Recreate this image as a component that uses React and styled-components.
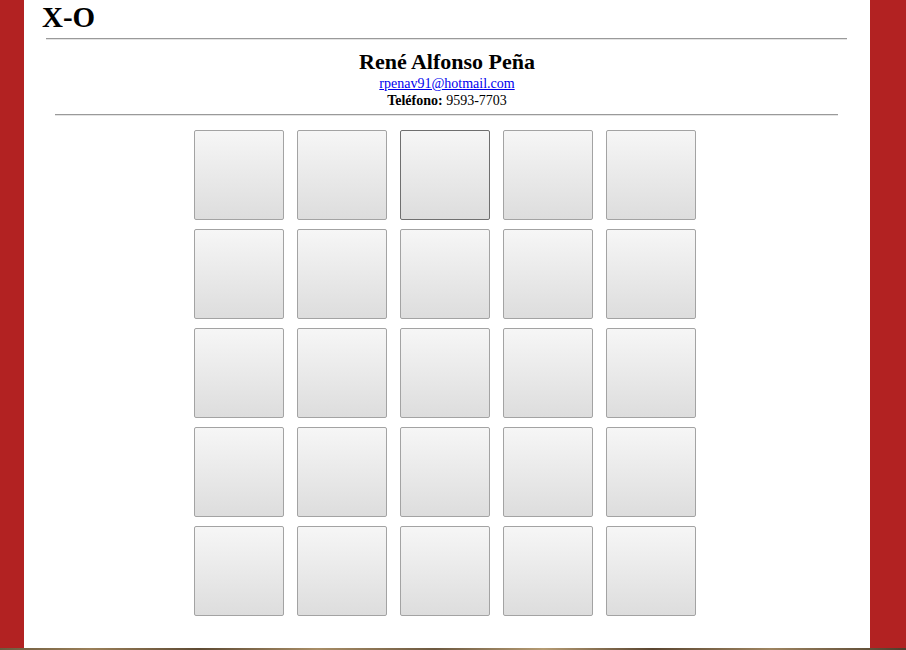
import React from "react";
import styled, { createGlobalStyle } from "styled-components";

const GlobalStyle = createGlobalStyle`
html, body {
  margin: 0;
  padding: 0;
  background-color: #b22222;
  font-family: "Liberation Serif", "Times New Roman", serif;
  color: #000;
}
`

const Page = styled.div`
width: 906px;
overflow: hidden;
`

const Sheet = styled.main`
width: 846px;
margin-left: 24px;
background-color: #fff;
padding-bottom: 32px;
display: flex;
flex-direction: column;
`

const Logo = styled.h1`
margin: 0;
padding: 1px 0 0 18px;
font-size: 29px;
line-height: 32px;
font-weight: bold;
`

const Rule = styled.hr`
margin: ${props => props.$margin};
border: none;
border-top: 1px solid #9a9a9a;
border-bottom: 1px solid #e4e4e4;
height: 0;
`

const Contact = styled.section`
display: flex;
flex-direction: column;
align-items: center;
text-align: center;
`

const Name = styled.h2`
margin: 9px 0 0;
font-size: 22px;
line-height: 26px;
font-weight: bold;
`

const Line = styled.div`
font-size: 14px;
line-height: 17px;

a {
  color: #0000ee;
  text-decoration: underline;
}
b {
  font-weight: bold;
}
`

const Board = styled.div`
display: grid;
grid-template-columns: repeat(5, 90px);
grid-auto-rows: 90px;
column-gap: 13px;
row-gap: 9px;
margin: 14px 0 0 170px;
`

const Cell = styled.button`
box-sizing: border-box;
width: 90px;
height: 90px;
padding: 0;
border: 1px solid ${props => props.$active ? "#6f6f6f" : "#a3a3a3"};
border-radius: 2px;
background: linear-gradient(to bottom, #f6f6f6 0%, #dddddd 100%);
cursor: pointer;
`

const Strip = styled.div`
height: 2px;
background: linear-gradient(to right, #6b5a3e 0%, #9a7f58 10%, #5e4a33 22%, #a88d66 35%, #6d5940 48%, #b59b73 60%, #5a4530 72%, #9e8460 85%, #4d3d2b 100%);
`

const App = () => {
  const cells = Array.from({ length: 25 }, (_, i) => i)
  return (
    <Page>
      <GlobalStyle />
      <Sheet>
        <Logo>X-O</Logo>
        <Rule $margin="5px 23px 0 22px" />
        <Contact>
          <Name>René Alfonso Peña</Name>
          <Line><a href="#mail">rpenav91@hotmail.com</a></Line>
          <Line><b>Teléfono:</b> 9593-7703</Line>
        </Contact>
        <Rule $margin="5px 32px 0 31px" />
        <Board>
          {cells.map(i => (
            <Cell key={i} $active={i === 2} aria-label={`casilla ${i + 1}`} />
          ))}
        </Board>
      </Sheet>
      <Strip />
    </Page>
  )
}

export default App
